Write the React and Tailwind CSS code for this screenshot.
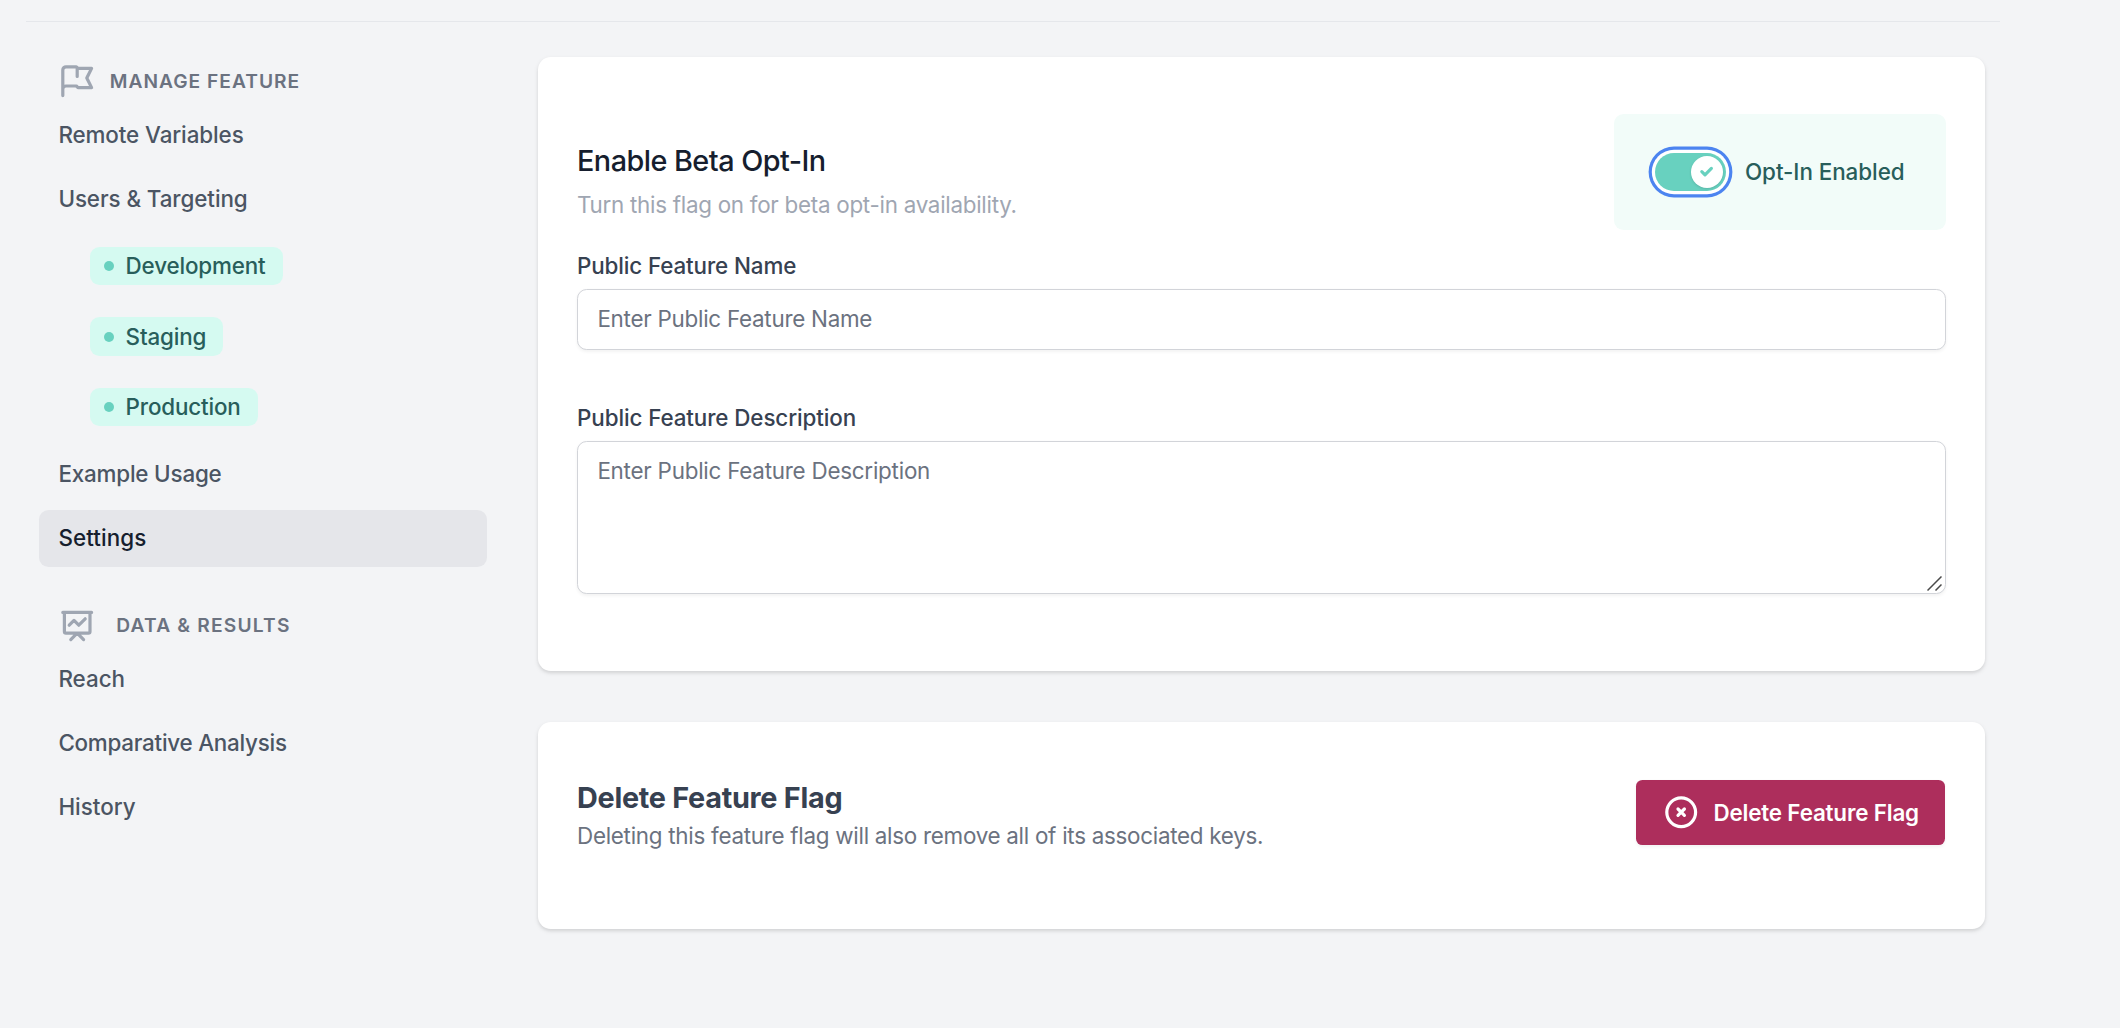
const strokeProps = {
  fill: "none",
  stroke: "currentColor",
  strokeWidth: 2,
  strokeLinecap: "round",
  strokeLinejoin: "round",
  viewBox: "0 0 24 24",
};

function FlagIcon() {
  return (
    <svg {...strokeProps} className="size-[38.4px] shrink-0 text-[#9fa6b2]">
      <path d="M3 21v-4m0 0V5a2 2 0 012-2h6.5l1 1H21l-3 6 3 6h-8.5l-1-1H5a2 2 0 00-2 2zm9-13.5V9" />
    </svg>
  );
}

function ChartIcon() {
  return (
    <svg {...strokeProps} className="size-[38.4px] shrink-0 text-[#9fa6b2]">
      <path d="M7 12l3-3 3 3 4-4M8 21l4-4 4 4M3 4h18M4 4h16v12a1 1 0 01-1 1H5a1 1 0 01-1-1V4z" />
    </svg>
  );
}

function XCircleIcon() {
  return (
    <svg {...strokeProps} className="size-[38.4px] shrink-0">
      <path d="M10 14l2-2m0 0l2-2m-2 2l-2-2m2 2l2 2m7-2a9 9 0 11-18 0 9 9 0 0118 0z" />
    </svg>
  );
}

function NavItem({ children, active, tracking = "tracking-normal" }) {
  return (
    <a
      className={
        active
          ? "flex h-[57px] items-center rounded-[9.6px] bg-[#e5e6ea] px-[19.4px] text-[#161e2e]"
          : "flex h-[57px] items-center px-[19.4px] text-[#4b5563]"
      }
    >
      <span className={tracking}>{children}</span>
    </a>
  );
}

function EnvPill({ children }) {
  return (
    <span className="flex h-[38.4px] w-fit items-center gap-[11.2px] rounded-[9.6px] bg-[#d5faf1] pr-[17px] pl-[14.4px] text-[#285e5b]">
      <span className="size-[10px] rounded-full bg-[#68d1bf]" />
      <span className="tracking-[-0.15px]">{children}</span>
    </span>
  );
}

function Sidebar() {
  return (
    <aside className="w-[448px] shrink-0 text-[22.4px] leading-[32px] font-medium">
      <h3 className="flex items-center gap-[13px] pt-[5px] pl-[19.4px] text-[19.2px] font-semibold tracking-[1px] text-[#6b7280]">
        <FlagIcon />
        <span>MANAGE FEATURE</span>
      </h3>
      <nav className="mt-[6px] flex flex-col gap-[7px]">
        <NavItem tracking="tracking-[-0.09px]">Remote Variables</NavItem>
        <NavItem tracking="tracking-[-0.08px]">Users &amp; Targeting</NavItem>
        <div className="flex flex-col gap-[32px] pt-[12.6px] pb-[12.4px] pl-[51px]">
          <EnvPill>Development</EnvPill>
          <EnvPill>Staging</EnvPill>
          <EnvPill>Production</EnvPill>
        </div>
        <NavItem tracking="tracking-[-0.18px]">Example Usage</NavItem>
        <NavItem active tracking="tracking-[0.1px]">Settings</NavItem>
      </nav>
      <h3 className="mt-[39px] flex items-center gap-[19.4px] pl-[19.4px] text-[19.2px] font-semibold tracking-[1.2px] text-[#6b7280]">
        <ChartIcon />
        <span>DATA &amp; RESULTS</span>
      </h3>
      <nav className="mt-[6.6px] flex flex-col gap-[7px]">
        <NavItem>Reach</NavItem>
        <NavItem tracking="tracking-[-0.24px]">Comparative Analysis</NavItem>
        <NavItem>History</NavItem>
      </nav>
    </aside>
  );
}

function OptInToggle() {
  return (
    <div className="flex h-[115.6px] w-[332px] items-center gap-[19px] rounded-[9.6px] bg-[#f2fcf9] pl-[41px] text-[22.4px] font-medium text-[#285e5b]">
      <button
        role="switch"
        aria-checked="true"
        className="flex h-[38.4px] w-[71px] items-center justify-end rounded-full bg-[#68d1bf] pr-[3.2px] ring-[3.2px] ring-[#4c84f0] ring-offset-[3.2px] ring-offset-white"
      >
        <span className="flex size-[32px] items-center justify-center rounded-full bg-white text-[#68d1bf] shadow">
          <svg viewBox="0 0 12 12" fill="currentColor" className="size-[19.2px]">
            <path d="M3.707 5.293a1 1 0 00-1.414 1.414l1.414-1.414zM5 8l-.707.707a1 1 0 001.414 0L5 8zm4.707-3.293a1 1 0 00-1.414-1.414l1.414 1.414zm-7.414 2l2 2 1.414-1.414-2-2-1.414 1.414zm3.414 2l4-4-1.414-1.414-4 4 1.414 1.414z" />
          </svg>
        </span>
      </button>
      <span className="tracking-[-0.05px]">Opt-In Enabled</span>
    </div>
  );
}

function BetaCard() {
  return (
    <section className="h-[614px] rounded-[12.8px] bg-white px-[39px] pt-[57px] shadow-[0_2px_5px_rgba(0,0,0,0.09),0_2px_3px_rgba(0,0,0,0.06)]">
      <div className="flex h-[132px] items-start justify-between">
        <div className="pt-[28px]">
          <h2 className="text-[28.8px] leading-[38px] font-medium tracking-[-0.53px] text-[#161e2e]">Enable Beta Opt-In</h2>
          <p className="mt-[9px] text-[22.4px] leading-[32px] tracking-[-0.27px] text-[#9fa6b2]">Turn this flag on for beta opt-in availability.</p>
        </div>
        <OptInToggle />
      </div>
      <div>
        <label className="block pt-[4px] text-[22.4px] leading-[32px] font-medium tracking-[-0.12px] text-[#374151]">Public Feature Name</label>
        <input
          type="text"
          placeholder="Enter Public Feature Name"
          className="mt-[7px] block h-[61px] w-full rounded-[9.6px] border border-[#d2d4d9] bg-white px-[19.4px] pb-[2px] text-[22.4px] tracking-[-0.25px] shadow-[0_1.6px_3.2px_rgba(0,0,0,0.05)] outline-none placeholder:text-[#6b7280]"
        />
      </div>
      <div className="mt-[52px]">
        <label className="block text-[22.4px] leading-[32px] font-medium tracking-[-0.1px] text-[#374151]">Public Feature Description</label>
        <div className="relative mt-[7px]">
          <textarea
            placeholder="Enter Public Feature Description"
            className="block h-[153px] w-full resize-none rounded-[9.6px] border border-[#d2d4d9] bg-white px-[19.4px] pt-[13px] text-[22.4px] leading-[32px] tracking-[-0.23px] shadow-[0_1.6px_3.2px_rgba(0,0,0,0.05)] outline-none placeholder:text-[#6b7280]"
          />
          <svg viewBox="0 0 15 15" className="absolute right-[4px] bottom-[3px] size-[15px] text-[#4a4a4a]" fill="none" stroke="currentColor" strokeWidth="1.5">
            <path d="M0.5 14.5L14.5 0.5M8.5 14.5L14.5 8.5" />
          </svg>
        </div>
      </div>
    </section>
  );
}

function DeleteCard() {
  return (
    <section className="flex h-[207px] items-start justify-between rounded-[12.8px] bg-white px-[39px] pt-[57px] shadow-[0_2px_5px_rgba(0,0,0,0.09),0_2px_3px_rgba(0,0,0,0.06)]">
      <div>
        <h2 className="text-[28.8px] leading-[38px] font-bold tracking-[-0.27px] text-[#374151]">Delete Feature Flag</h2>
        <p className="mt-[3px] text-[22.4px] leading-[32px] tracking-[-0.27px] text-[#6b7280]">Deleting this feature flag will also remove all of its associated keys.</p>
      </div>
      <button className="mt-[1px] mr-px flex h-[65px] w-[309px] items-center gap-[13px] rounded-[6.4px] bg-[#ad2e5c] pl-[26px] text-[22.4px] font-semibold tracking-[-0.16px] text-white shadow-[0_1.6px_3.2px_rgba(0,0,0,0.05)]">
        <XCircleIcon />
        <span className="pt-px">Delete Feature Flag</span>
      </button>
    </section>
  );
}

export default function App() {
  return (
    <div className="h-[1028px] w-[2120px] overflow-hidden bg-[#f3f4f6] font-['Inter',sans-serif]">
      <div className="mt-[21px] ml-[26px] h-px w-[1974px] bg-[#e5e7eb]" />
      <div className="flex gap-[51px] pt-[35px] pl-[39px]">
        <Sidebar />
        <main className="flex w-[1447px] flex-col gap-[51px]">
          <BetaCard />
          <DeleteCard />
        </main>
      </div>
    </div>
  );
}
